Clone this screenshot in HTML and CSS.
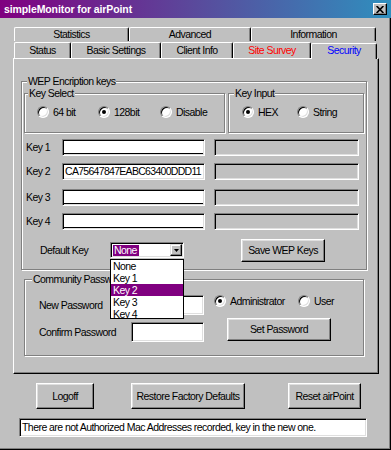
FILE: index.html
```html
<!DOCTYPE html>
<html>
<head>
<meta charset="utf-8">
<title>simpleMonitor for airPoint</title>
<link rel="stylesheet" href="styles.css">
</head>
<body>
<div class="window">
  <div class="titlebar">
    <span class="title">simpleMonitor for airPoint</span>
    <span class="close"><svg width="8" height="7" viewBox="0 0 8 7"><path d="M0.6 0 L7.4 7 M7.4 0 L0.6 7" stroke="#000" stroke-width="1.7"/></svg></span>
  </div>
  <div class="main">
    <div class="tabs">
      <div class="tabrow back">
        <div class="tab w-stat">Statistics</div>
        <div class="tab w-adv">Advanced</div>
        <div class="tab w-info">Information</div>
      </div>
      <div class="tabrow front">
        <div class="tab w-status">Status</div>
        <div class="tab w-basic">Basic Settings</div>
        <div class="tab w-client">Client Info</div>
        <div class="tab w-site red">Site Survey</div>
        <div class="tab w-sec blue selected">Security</div>
      </div>
    </div>

    <div class="panel">
      <div class="group wep">
        <div class="legend">WEP Encription keys</div>
        <div class="selrow">
          <div class="group keysel">
            <div class="legend">Key Select</div>
            <div class="radios">
              <div class="opt w61"><span class="radio"></span>64 bit</div>
              <div class="opt w62"><span class="radio on"></span>128bit</div>
              <div class="opt"><span class="radio"></span>Disable</div>
            </div>
          </div>
          <div class="group keyinput">
            <div class="legend">Key Input</div>
            <div class="radios">
              <div class="opt w55"><span class="radio on"></span>HEX</div>
              <div class="opt"><span class="radio"></span>String</div>
            </div>
          </div>
        </div>

        <div class="keys">
          <div class="keyrow"><span class="klabel">Key 1</span><span class="field key empty"></span><span class="field key2 gray"></span></div>
          <div class="keyrow"><span class="klabel">Key 2</span><span class="field key">CA75647847EABC63400DDD11</span><span class="field key2 gray"></span></div>
          <div class="keyrow"><span class="klabel">Key 3</span><span class="field key empty"></span><span class="field key2 gray"></span></div>
          <div class="keyrow"><span class="klabel">Key 4</span><span class="field key empty"></span><span class="field key2 gray"></span></div>
        </div>

        <div class="defrow">
          <span class="dlabel">Default Key</span>
          <div class="combo">
            <span class="combo-val">None</span>
            <span class="combo-btn"><svg width="5" height="3" viewBox="0 0 5 3"><path d="M0 0H5L2.5 3Z" fill="#000"/></svg></span>
            <div class="combo-list">
              <div class="item">None</div>
              <div class="item">Key 1</div>
              <div class="item hl">Key 2</div>
              <div class="item">Key 3</div>
              <div class="item">Key 4</div>
            </div>
          </div>
          <div class="btn save">Save WEP Keys</div>
        </div>
      </div>

      <div class="group community">
        <div class="legend">Community Password</div>
        <div class="cgrid">
          <span class="clabel">New Password</span>
          <span class="field pw"></span>
          <div class="roles">
            <div class="opt w84"><span class="radio on"></span>Administrator</div>
            <div class="opt"><span class="radio"></span>User</div>
          </div>
          <span class="clabel">Confirm Password</span>
          <span class="field pw"></span>
          <div class="setcell"><div class="btn setpw">Set Password</div></div>
        </div>
      </div>
    </div>

    <div class="actions">
      <div class="btn logoff">Logoff</div>
      <div class="btn restore">Restore Factory Defaults</div>
      <div class="btn reset">Reset airPoint</div>
    </div>

    <div class="status">There are not Authorized Mac Addresses recorded, key in the new one.</div>
  </div>
</div>
</body>
</html>
```

FILE: styles.css
```css
* { box-sizing: border-box; }

html, body {
  margin: 0;
  padding: 0;
}

body {
  width: 391px;
  height: 450px;
  overflow: hidden;
  background: #c0c0c0;
  font-family: "Liberation Sans", Arial, sans-serif;
  font-size: 10.5px;
  letter-spacing: -0.55px;
  line-height: 13px;
  color: #000;
}

.window {
  width: 391px;
  height: 450px;
  display: flex;
  flex-direction: column;
  background: #c0c0c0;
}

/* ---------- title bar ---------- */
.titlebar {
  height: 18px;
  flex: none;
  display: flex;
  align-items: center;
  justify-content: space-between;
  padding: 0 4px 0 4px;
  background: linear-gradient(90deg, #800080 0%, #5a4a9c 50%, #2f8fbe 100%);
}

.title {
  color: #fff;
  font-weight: bold;
  font-size: 10.5px;
  letter-spacing: -0.1px;
}

.close {
  width: 14px;
  height: 12px;
  display: flex;
  align-items: center;
  justify-content: center;
  background: #c0c0c0;
  border: 1px solid;
  border-color: #fff #000 #000 #fff;
  box-shadow: inset -1px -1px #808080;
}

.close svg { display: block; }

/* ---------- main area ---------- */
.main {
  flex: 1;
  padding: 9px 0 0 13px;
  border-right: 1px solid #000;
  border-bottom: 1px solid #000;
  box-shadow: inset -1px -1px #808080;
}

/* ---------- tabs ---------- */
.tabs { margin-left: 1px; }

.tabrow { display: flex; }
.tabrow.back { height: 14px; }
.tabrow.front { height: 17px; align-items: flex-end; }

.tab {
  display: flex;
  align-items: center;
  justify-content: center;
  height: 100%;
  border-top: 1px solid #fff;
  border-left: 1px solid #fff;
  border-right: 1px solid #000;
  box-shadow: inset -1px 0 #808080;
  border-radius: 2px 2px 0 0;
  background: #c0c0c0;
}

.tabrow.front .tab { height: 16px; }

.tab.selected {
  position: relative;
  z-index: 1;
  height: 19px;
  margin-bottom: -1px;
  padding-bottom: 2px;
}

.w-stat { width: 115px; }
.w-adv { width: 122px; }
.w-info { width: 125px; }
.w-status { width: 57px; }
.w-basic { width: 90px; }
.w-client { width: 72px; }
.w-site { width: 78px; }
.w-sec { width: 66px; }

.red { color: #ff0000; }
.blue { color: #0000ff; }

/* ---------- panel ---------- */
.panel {
  width: 366px;
  height: 316px;
  border-top: 1px solid #fff;
  border-left: 1px solid #fff;
  border-right: 1px solid #000;
  border-bottom: 1px solid #000;
  box-shadow: inset -1px -1px #808080;
  padding: 22px 0 0 7px;
}

/* ---------- group boxes ---------- */
.group {
  border: 1px solid #808080;
  box-shadow: inset 1px 1px #fff, 1px 1px #fff;
}

.legend {
  width: max-content;
  margin-top: -7px;
  padding: 0 1px;
  background: #c0c0c0;
  line-height: 13px;
}

.wep {
  width: 346px;
  height: 189px;
}
.wep > .legend { margin-left: 5px; }

.selrow {
  display: flex;
  margin: 5px 0 0 2px;
}

.keysel { width: 201px; height: 40px; }
.keysel > .legend { margin-left: 3px; }
.keysel .radios { padding-left: 12px; }

.keyinput { width: 136px; height: 40px; margin-left: 3px; }
.keyinput > .legend { margin-left: 5px; }
.keyinput .radios { padding-left: 13px; }

.radios {
  display: flex;
  align-items: center;
  height: 14px;
  margin-top: 5px;
}

.opt {
  display: flex;
  align-items: center;
  gap: 4px;
  white-space: nowrap;
}

.w55 { width: 55px; }
.w61 { width: 61px; }
.w62 { width: 62px; }
.w84 { width: 84px; }

.radio {
  flex: none;
  width: 12px;
  height: 12px;
  border-radius: 50%;
  border: 1px solid;
  border-color: #808080 #fff #fff #808080;
  background: #fff;
  box-shadow: inset 1px 1px #000, inset -1px -1px #dfdfdf;
  display: flex;
  align-items: center;
  justify-content: center;
}

.radio.on::after {
  content: "";
  width: 4px;
  height: 4px;
  border-radius: 50%;
  background: #000;
}

/* ---------- key rows ---------- */
.keys { padding-left: 4px; }

.keyrow {
  display: flex;
  align-items: center;
  height: 17px;
}

.klabel { width: 36px; flex: none; }

.keyrow:nth-child(1) { margin-top: 6px; }
.keyrow:nth-child(2) { margin-top: 7px; }
.keyrow:nth-child(3) { margin-top: 9px; }
.keyrow:nth-child(4) { margin-top: 7px; }

.field {
  display: flex;
  align-items: center;
  height: 17px;
  padding-left: 2px;
  border: 1px solid;
  border-color: #808080 #fff #fff #808080;
  box-shadow: inset 1px 1px #000, inset -1px -1px #dfdfdf;
  background: #fff;
  white-space: nowrap;
  overflow: hidden;
}

.field.key { width: 143px; flex: none; letter-spacing: -0.7px; }
.field.key2 { width: 145px; flex: none; margin-left: 9px; }

.field.empty {
  background: linear-gradient(to top, #fff 0 1px, #000 1px 2px, #fff 2px);
}

.field.gray { background: #c0c0c0; }

.field.pw { height: 20px; }

/* ---------- default key row ---------- */
.defrow {
  display: flex;
  align-items: center;
  height: 23px;
  margin-top: 9px;
  padding-left: 18px;
}

.dlabel { width: 70px; flex: none; }

.combo {
  position: relative;
  align-self: flex-start;
  margin-top: 3px;
  width: 74px;
  height: 16px;
  flex: none;
  display: flex;
  align-items: center;
  justify-content: space-between;
  padding: 0 1px 0 2px;
  border: 1px solid;
  border-color: #808080 #fff #fff #808080;
  box-shadow: inset 1px 1px #000, inset -1px -1px #dfdfdf;
  background: #fff;
}

.combo-val {
  background: #800080;
  color: #fff;
  padding: 0 2px 0 1px;
  line-height: 11px;
}

.combo-btn {
  width: 12px;
  height: 12px;
  display: flex;
  align-items: center;
  justify-content: center;
  background: #c0c0c0;
  border: 1px solid;
  border-color: #dfdfdf #000 #000 #dfdfdf;
  box-shadow: inset -1px -1px #808080, inset 1px 1px #fff;
}

.combo-btn svg { display: block; }

.combo-list {
  position: absolute;
  z-index: 10;
  top: 16px;
  left: -1px;
  width: 74px;
  height: 60px;
  overflow: hidden;
  background: #fff;
  border: 1px solid #000;
}

.item {
  height: 12px;
  line-height: 12px;
  padding-left: 2px;
}

.item.hl {
  background: #800080;
  color: #fff;
}

/* ---------- buttons ---------- */
.btn {
  display: flex;
  align-items: center;
  justify-content: center;
  flex: none;
  background: #c0c0c0;
  border: 1px solid;
  border-color: #fff #000 #000 #fff;
  box-shadow: inset -1px -1px #808080, inset 1px 1px #dfdfdf;
  white-space: nowrap;
}

.save {
  width: 84px;
  height: 23px;
  margin-left: 57px;
}

/* ---------- community ---------- */
.community {
  width: 340px;
  height: 77px;
  margin: 9px 0 0 3px;
}
.community > .legend { margin-left: 7px; }

.cgrid {
  display: grid;
  grid-template-columns: 92px 73px auto;
  grid-template-rows: 20px 20px;
  row-gap: 7px;
  align-items: center;
  margin-top: 9px;
  padding-left: 14px;
}

.roles {
  display: flex;
  align-items: center;
  align-self: start;
  height: 12px;
  margin: 0 0 0 10px;
}

.setcell { align-self: start; }

.setpw {
  width: 104px;
  height: 23px;
  margin: -4px 0 0 23px;
}

/* ---------- bottom actions ---------- */
.actions {
  display: flex;
  height: 26px;
  margin-top: 9px;
}

.actions .btn { height: 26px; }
.logoff { width: 58px; margin-left: 23px; }
.restore { width: 114px; margin-left: 37px; }
.reset { width: 73px; margin-left: 43px; }

.status {
  display: flex;
  align-items: center;
  width: 348px;
  height: 19px;
  margin: 9px 0 0 6px;
  padding-left: 2px;
  border: 1px solid;
  border-color: #808080 #fff #fff #808080;
  box-shadow: inset 1px 1px #000, inset -1px -1px #dfdfdf;
  background: #fff;
  white-space: nowrap;
  overflow: hidden;
}
```
